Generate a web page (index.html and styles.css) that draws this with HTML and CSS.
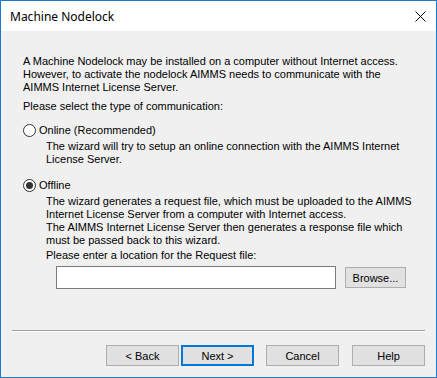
FILE: index.html
```html
<!DOCTYPE html>
<html lang="en">
<head>
    <meta charset="UTF-8">
    <title>Machine Nodelock</title>
    <link rel="stylesheet" href="styles.css">
</head>
<body>

<div class="window">
    <div class="titlebar">
        <span class="title">Machine Nodelock</span>
        <svg class="close" width="11" height="11" viewBox="0 0 11 11">
            <path d="M0.5 0.5 L10.5 10.5 M10.5 0.5 L0.5 10.5" stroke="#000" stroke-width="1" fill="none"/>
        </svg>
    </div>

    <div class="content">
        <p class="intro">A Machine Nodelock may be installed on a computer without Internet access.<br>However, to activate the nodelock AIMMS needs to communicate with the<br>AIMMS Internet License Server.</p>
        <p class="prompt">Please select the type of communication:</p>

        <div class="option option-online">
            <div class="radio-row"><span class="radio"></span>Online (Recommended)</div>
            <p class="desc">The wizard will try to setup an online connection with the AIMMS Internet<br>License Server.</p>
        </div>

        <div class="option option-offline">
            <div class="radio-row"><span class="radio checked"></span>Offline</div>
            <p class="desc">The wizard generates a request file, which must be uploaded to the AIMMS<br>Internet License Server from a computer with Internet access.<br>The AIMMS Internet License Server then generates a response file which<br>must be passed back to this wizard.</p>
            <p class="desc file-label">Please enter a location for the Request file:</p>
            <div class="file-row">
                <input type="text" class="file-input">
                <button class="btn btn-browse">Browse...</button>
            </div>
        </div>
    </div>

    <div class="footer">
        <div class="separator"></div>
        <div class="buttons">
            <button class="btn">&lt; Back</button>
            <button class="btn btn-default">Next &gt;</button>
            <button class="btn btn-cancel">Cancel</button>
            <button class="btn btn-help">Help</button>
        </div>
    </div>
</div>

</body>
</html>
```

FILE: styles.css
```css
/* Windows 10 style wizard dialog */
body {
    margin: 0;
    font-family: 'Liberation Sans', Arial, sans-serif;
    font-size: 11px;
    color: #000;
}

.window {
    width: 437px;
    height: 378px;
    box-sizing: border-box;
    border: 1px solid #1e78cc;
    display: flex;
    flex-direction: column;
    background-color: #f0f0f0;
}

.titlebar {
    height: 30px;
    flex-shrink: 0;
    background-color: #fff;
    display: flex;
    align-items: center;
    justify-content: space-between;
    padding: 0 10px 0 9px;
}

.title {
    font-family: 'Noto Sans', 'Open Sans', sans-serif;
    font-size: 12px;
}

.close {
    display: block;
}

.content {
    flex: 1;
    padding: 24px 11px 0 22px;
}

p {
    margin: 0;
    line-height: 13px;
}

.prompt {
    margin-top: 6px;
}

.option-online {
    margin-top: 11px;
}

.option-offline {
    margin-top: 13px;
}

.radio-row {
    display: flex;
    align-items: center;
    height: 13px;
    line-height: 13px;
}

.radio {
    width: 13px;
    height: 13px;
    box-sizing: border-box;
    border: 1px solid #333;
    border-radius: 50%;
    background-color: #fff;
    margin-right: 3px;
    display: flex;
    align-items: center;
    justify-content: center;
}

.radio.checked::after {
    content: '';
    width: 7px;
    height: 7px;
    border-radius: 50%;
    background-color: #333;
}

.desc {
    margin: 3px 0 0 23px;
}

.file-label {
    margin-top: 2px;
}

.file-row {
    display: flex;
    align-items: center;
    margin: 4px 0 0 33px;
}

.file-input {
    width: 280px;
    height: 23px;
    box-sizing: border-box;
    border: 1px solid #7a7a7a;
    background-color: #fff;
    margin: 0 9px 0 0;
    padding: 0 3px;
}

.btn {
    width: 73px;
    height: 21px;
    box-sizing: border-box;
    border: 1px solid #adadad;
    background-color: #e1e1e1;
    font-family: 'Liberation Sans', Arial, sans-serif;
    font-size: 11px;
    color: #000;
    padding: 0;
}

.btn-browse {
    width: 61px;
}

.btn-default {
    border: 2px solid #0078d7;
    margin-left: 2px;
}

.btn-cancel {
    margin-left: 12px;
}

.btn-help {
    margin-left: 13px;
}

/* Footer with separator and wizard buttons */
.footer {
    padding: 0 11px 11px 11px;
}

.separator {
    border-top: 1px solid #a0a0a0;
    border-bottom: 1px solid #fff;
}

.buttons {
    display: flex;
    justify-content: flex-end;
    margin-top: 13px;
}
```
